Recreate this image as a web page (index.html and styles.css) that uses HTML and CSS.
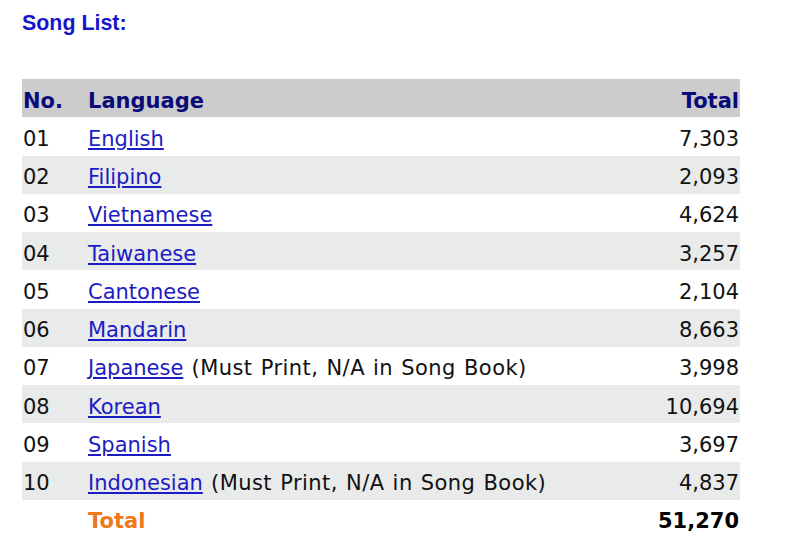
FILE: index.html
```html
<!DOCTYPE html>
<html>
<head>
<meta charset="utf-8">
<link rel="stylesheet" href="styles.css">
</head>
<body>
<h2 class="title">Song List:</h2>
<table class="songs">
  <thead>
    <tr class="head"><th class="no">No.</th><th class="lang">Language</th><th class="tot">Total</th></tr>
  </thead>
  <tbody>
    <tr><td class="no">01</td><td class="lang"><a href="#">English</a></td><td class="tot">7,303</td></tr>
    <tr class="alt"><td class="no">02</td><td class="lang"><a href="#">Filipino</a></td><td class="tot">2,093</td></tr>
    <tr><td class="no">03</td><td class="lang"><a href="#">Vietnamese</a></td><td class="tot">4,624</td></tr>
    <tr class="alt"><td class="no">04</td><td class="lang"><a href="#">Taiwanese</a></td><td class="tot">3,257</td></tr>
    <tr><td class="no">05</td><td class="lang"><a href="#">Cantonese</a></td><td class="tot">2,104</td></tr>
    <tr class="alt"><td class="no">06</td><td class="lang"><a href="#">Mandarin</a></td><td class="tot">8,663</td></tr>
    <tr><td class="no">07</td><td class="lang"><a href="#">Japanese</a><span class="note"> (Must Print, N/A in Song Book)</span></td><td class="tot">3,998</td></tr>
    <tr class="alt"><td class="no">08</td><td class="lang"><a href="#">Korean</a></td><td class="tot">10,694</td></tr>
    <tr><td class="no">09</td><td class="lang"><a href="#">Spanish</a></td><td class="tot">3,697</td></tr>
    <tr class="alt"><td class="no">10</td><td class="lang"><a href="#">Indonesian</a><span class="note"> (Must Print, N/A in Song Book)</span></td><td class="tot">4,837</td></tr>
    <tr class="sum"><td class="no"></td><td class="lang label">Total</td><td class="tot">51,270</td></tr>
  </tbody>
</table>
</body>
</html>
```
FILE: styles.css
```css
html, body {
  margin: 0;
  padding: 0;
  background: #ffffff;
}
body {
  padding: 0 22px;
  font-family: "DejaVu Sans", Verdana, sans-serif;
}
.title {
  margin: 0;
  padding-top: 11px;
  font-family: "Liberation Sans", Arial, sans-serif;
  font-size: 21.4px;
  font-weight: bold;
  line-height: 24px;
  color: #1515cc;
}
.songs {
  margin-top: 44px;
  width: 718px;
  border-collapse: collapse;
  font-size: 21px;
  color: #111111;
}
.songs tr {
  height: 38.25px;
}
.songs th, .songs td {
  padding: 5px 1px 0 1px;
  vertical-align: middle;
  line-height: 24px;
}
.songs th {
  text-align: left;
  color: #0a0a78;
  font-weight: bold;
}
.head {
  background: #cccccc;
}
.alt {
  background: #e9eaea;
}
.no {
  width: 63px;
}
.tot {
  text-align: right;
}
.songs th.tot {
  text-align: right;
}
.songs a {
  color: #1c1cc4;
  text-decoration: underline;
}
.note {
  letter-spacing: 0.45px;
  word-spacing: 1px;
}
.sum td {
  font-weight: bold;
  color: #000000;
}
.sum .label {
  color: #ee7a1b;
}
```
